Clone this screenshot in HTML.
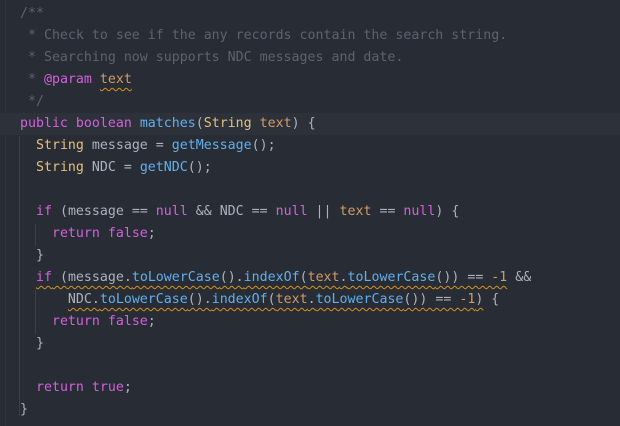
<!DOCTYPE html>
<html><head><meta charset="utf-8"><style>
html,body{margin:0;padding:0;}
body{width:620px;height:426px;background:#282c34;overflow:hidden;position:relative;font-family:"DejaVu Sans Mono","Liberation Mono",monospace;font-size:13.28px;color:#abb2bf;}
.gut{position:absolute;left:5px;top:0;width:1px;height:426px;background:#31353d;}
.cur{position:absolute;left:0;top:113px;width:620px;height:22px;background:#2c313a;}
.guide{position:absolute;width:1px;background:#3b4048;}
.l{position:absolute;left:20px;height:22px;line-height:22px;white-space:pre;}
.c{color:#5c6370}.k{color:#d55fde}.f{color:#61afef}.t{color:#e5c07b}.p{color:#d19a66}.n{color:#d19a66}
.w{text-decoration:underline wavy #d8921f;text-decoration-thickness:1px;text-underline-offset:4px;}
</style></head><body>
<div class="gut"></div>
<div class="cur"></div>
<div class="guide" style="left:19px;top:136px;height:280px"></div>
<div class="guide" style="left:35px;top:224px;height:22px"></div>
<div class="guide" style="left:35px;top:290px;height:44px"></div>
<div class="l c" style="top:3px">/**</div>
<div class="l c" style="top:25px"> * Check to see if the any records contain the search string.</div>
<div class="l c" style="top:47px"> * Searching now supports NDC messages and date.</div>
<div class="l c" style="top:69px"> * <span class="k">@param</span> <span class="p w">text</span></div>
<div class="l c" style="top:91px"> */</div>
<div class="l" style="top:113px"><span class="k">public boolean</span> <span class="f">matches</span>(<span class="t">String</span> <span class="p">text</span>) {</div>
<div class="l" style="top:135px">  <span class="t">String</span> message = <span class="f">getMessage</span>();</div>
<div class="l" style="top:157px">  <span class="t">String</span> NDC = <span class="f">getNDC</span>();</div>
<div class="l" style="top:201px">  <span class="k">if</span> (message == <span class="k">null</span> &amp;&amp; NDC == <span class="k">null</span> || <span class="p">text</span> == <span class="k">null</span>) {</div>
<div class="l" style="top:223px">    <span class="k">return false</span>;</div>
<div class="l" style="top:245px">  }</div>
<div class="l" style="top:267px">  <span class="w"><span class="k">if</span> (message.<span class="f">toLowerCase</span>().<span class="f">indexOf</span>(<span class="p">text</span>.<span class="f">toLowerCase</span>()) == <span class="n">-1</span></span> &amp;&amp;</div>
<div class="l" style="top:289px">      <span class="w">NDC.<span class="f">toLowerCase</span>().<span class="f">indexOf</span>(<span class="p">text</span>.<span class="f">toLowerCase</span>()) == <span class="n">-1</span>)</span> {</div>
<div class="l" style="top:311px">    <span class="k">return false</span>;</div>
<div class="l" style="top:333px">  }</div>
<div class="l" style="top:377px">  <span class="k">return true</span>;</div>
<div class="l" style="top:399px">}</div>
</body></html>
